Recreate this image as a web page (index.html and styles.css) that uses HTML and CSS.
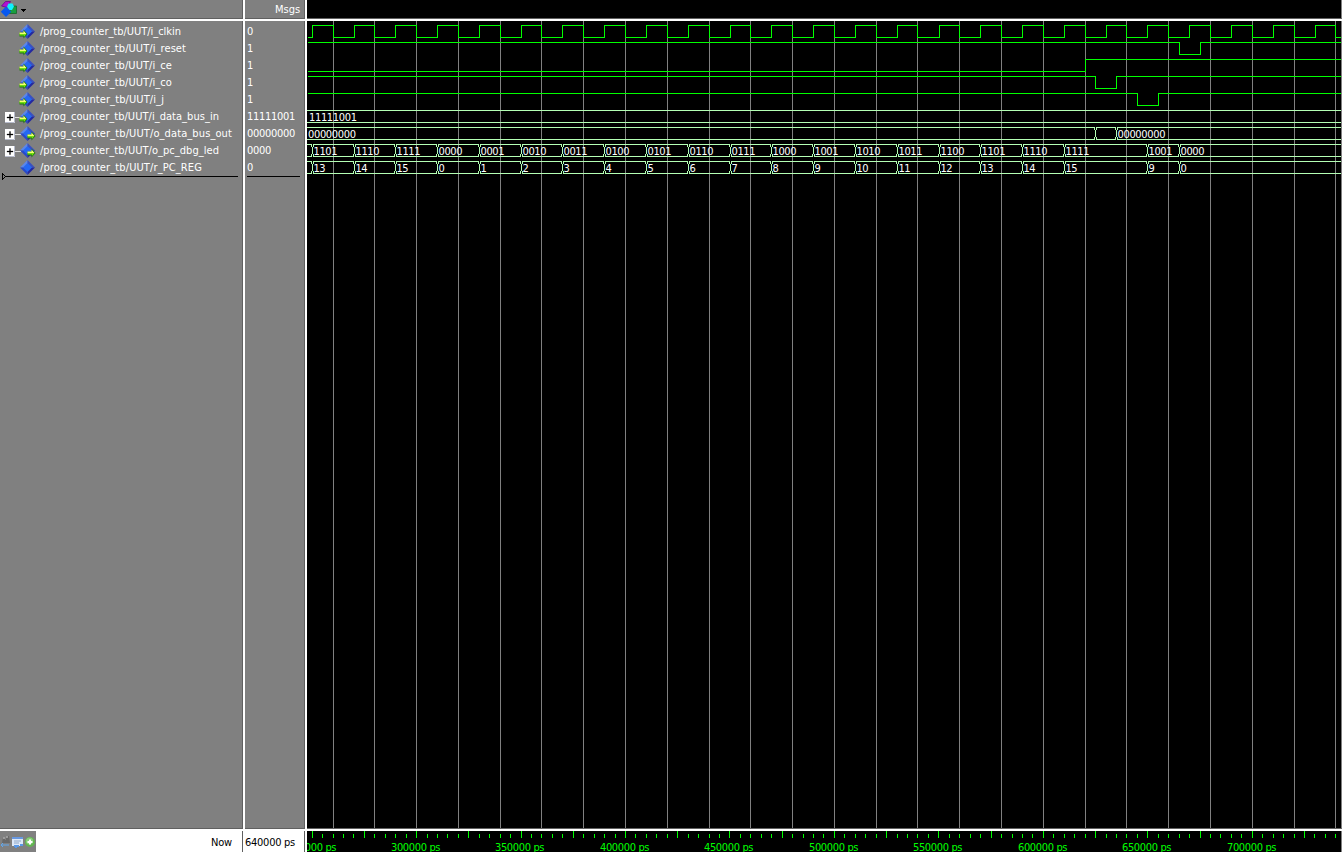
FILE: index.html
```html
<!DOCTYPE html>
<html lang="en">
<head>
<meta charset="utf-8">
<title>Wave</title>
<link rel="stylesheet" href="styles.css">
</head>
<body>
<svg class="defs" width="0" height="0">
  <defs>
    <g id="diamond">
      <path d="M7.5 0L0 7.5h7.500z" fill="#5b86ea"/>
      <path d="M7.5 0L15 7.500H7.500z" fill="#3a50c0"/>
      <path d="M0 7.500L7.500 15V7.500z" fill="#2a49c8"/>
      <path d="M15 7.500L7.500 15V7.500z" fill="#2428a0"/>
      <path d="M7.500 3L12 7.500 7.500 12 3 7.500z" fill="#2468f4"/>
    </g>
    <g id="arrow">
      <path d="M0 3h4V0l4 4.500-4 4.500V7H0z" fill="#187010"/>
      <path d="M0 3h4V1l3 3.500H0z" fill="#f4ff70"/>
      <path d="M0 4.500h7L4.500 7.500V6H0z" fill="#70e010"/>
    </g>
  </defs>
</svg>
<div class="wave">
  <div class="head names-head">
    <svg width="30" height="18" viewBox="0 0 30 18">
      <path d="M5.500 1.500h5L7 7.500 1.500 6z" fill="#b010d0" stroke="#600080" stroke-width=".7"/>
      <path d="M10.500 6h6v7.500h-7z" fill="#18a040" stroke="#106020" stroke-width=".7"/>
      <path d="M6 6.500l5.200 5.200-5.200 5.200-5.200-5.200z" fill="#0858f0"/>
      <path d="M8.500 3.500h4l1.500 3-2 3.500H9.500L7 6.500z" fill="#10f0ff"/>
      <path d="M21 9h5v1h-1v1h-1v1h-1v-1h-1v-1h-1z" fill="#000"/>
    </svg>
  </div>
  <div class="head msgs-head"><span data-w="25">Msgs</span></div>
  <div class="head wave-head"></div>
  <div class="edge"></div>

  <div class="names" id="names"></div>
  <div class="values" id="values"></div>
  <div class="plot"><svg id="plot" width="1034" height="807" viewBox="307 21 1034 807"></svg></div>
  <div class="edge"></div>

  <div class="foot names-foot">
    <svg class="tools" width="36" height="21" viewBox="0 0 36 21">
      <path d="M2 12l1-6h2v3h1V5h3l1 7z" fill="#686868"/>
      <path d="M3 7h2M6 6h2" stroke="#d0d0d0"/>
      <path d="M1 14h8M3 12l-2 2 2 2" stroke="#60a8f0" fill="none"/>
      <path d="M12 6h11v9H12z" fill="#dce8f8"/>
      <path d="M12 6h11v2H12z" fill="#6898e0"/>
      <path d="M14 10h7M14 12h5" stroke="#90a8c8"/>
      <path d="M14 14h5v2h-2v1h-2v-1h-1zM20 13h3v2h-3z" fill="#5898e8"/>
      <circle cx="30" cy="11" r="5" fill="#62b650"/>
      <circle cx="29.500" cy="10" r="3.500" fill="#8ace7c"/>
      <path d="M27.500 11h5M30 8.500v5" stroke="#fff" stroke-width="2"/>
    </svg>
    <span data-w="21">Now</span>
  </div>
  <div class="foot time-foot"><span data-w="50">640000 ps</span></div>
  <div class="foot ruler"><svg id="ruler" width="1034" height="21" viewBox="307 831 1034 21"></svg></div>
  <div class="edge"></div>
</div>
<script src="wave.js"></script>
</body>
</html>
```
FILE: styles.css
```css
body {
  margin: 0;
  background: #fff;
  overflow: hidden;
  font: 11px/17px "DejaVu Sans Condensed", "DejaVu Sans", sans-serif;
  font-stretch: condensed;
}
.defs { display: block; height: 0; position: absolute; }
.wave {
  display: grid;
  width: 1344px;
  height: 852px;
  grid-template-columns: 243px 62px 1037px 2px;
  grid-template-rows: 19px 810px 23px;
  white-space: nowrap;
}
.wave svg { display: block; }
.head, .names, .values, .plot {
  box-sizing: border-box;
  border-bottom: 1px solid #606060;
}
.names-head, .msgs-head, .names, .values {
  background: #808080;
  color: #fff;
  border-right: 1px solid #606060;
}
.msgs-head, .values, .time-foot { margin-left: 2px; }
.msgs-head { text-align: right; padding-right: 4px; line-height: 19px; }
.wave-head, .plot, .ruler {
  margin-left: 2px;
  background: #000;
  border-right: 1px solid #808080;
}
.names, .values, .plot { margin-top: 2px; }
.names, .values { padding-top: 2px; }
.name { display: flex; height: 17px; }
.name svg { width: 40px; height: 17px; flex: none; }
.values { padding-left: 2px; }
.value { height: 17px; }
.wave .mark { width: 239px; height: 7px; margin-top: -3px; }
.bar { height: 1px; width: 53px; background: #000; }
.foot { margin-top: 2px; height: 21px; box-sizing: border-box; color: #000; line-height: 23px; }
.names-foot {
  display: flex;
  justify-content: space-between;
  padding-right: 10px;
  border-right: 1px solid #606060;
}
.time-foot { border-right: 1px solid #606060; }
.tools { background: #808080; }
.grid { fill: #808080; }
.clock { fill: none; stroke: #00ff00; shape-rendering: crispEdges; }
.bus { fill: none; stroke: #b4ffb4; shape-rendering: crispEdges; }
.label { fill: #fff; }
.tick { fill: #00ff00; }
```
FILE: wave.js
```js
const signals = [
  ["i_clkin", "0", 141, "in"], ["i_reset", "1", 146, "in"], ["i_ce", "1", 132, "in"],
  ["i_co", "1", 132, "in"], ["i_j", "1", 124, "in"],
  ["i_data_bus_in", "11111001", 179, "in", true],
  ["o_data_bus_out", "00000000", 192, "out", true],
  ["o_pc_dbg_led", "0000", 179, "out", true],
  ["r_PC_REG", "0", 162, ""]
];
let names = "", values = "";
for (const [name, value, width, dir, bus] of signals) {
  let icon = '<use href="#diamond" x="20" y="1"/>';
  if (bus) icon = '<path d="M15 9.500h6" stroke="#e0e0e0"/><path d="M5 4h10v11H5z" fill="#fff"/><path d="M5 14.500h9.500V4" stroke="#b8bccc" fill="none"/><path d="M7 9h6v1H7zM9.500 6.500h1v6h-1z" fill="#000" stroke="#000" stroke-width=".3"/>' + icon;
  if (dir === "in") icon += '<use href="#arrow" x="19.500" y="6.500"/>';
  if (dir === "out") icon += '<use href="#arrow" x="27.500" y="6.500"/>';
  names += `<div class="name"><svg viewBox="0 0 40 17">${icon}</svg><span data-w="${width}">/prog_counter_tb/UUT/${name}</span></div>`;
  values += `<div class="value"><span data-w="${value.length * 6}">${value}</span></div>`;
}
names += '<svg class="mark"><path d="M2.500 .5v6M2.500 .5l3 3-3 3M5 3.500h233" fill="none" stroke="#000" shape-rendering="crispEdges"/></svg>';
document.getElementById("names").innerHTML = names;
document.getElementById("values").innerHTML = values + '<div class="bar"></div>';

for (const el of document.querySelectorAll("[data-w]")) {
  const w = el.getBoundingClientRect().width;
  el.style.letterSpacing = (el.dataset.w - w) / el.textContent.length + "px";
}

const START = 333, STEP = 41.785, END = 1341;
const text = (x, y, s, cls, w) => `<text class="${cls}" x="${x}" y="${y}" textLength="${w}">${s}</text>`;
let out = "";
for (let k = 0; k < 25; k++) out += `<path class="grid" d="M${Math.floor(START + STEP * k)} 21h1v807h-1z"/>`;

let clock = "M308 37.500";
for (let k = 0; k < 25; k++) {
  const fall = Math.floor(START + STEP * k) + .5;
  const rise = Math.floor(START + STEP * (k - .5) + .15) + .5;
  clock += `H${rise}V25.500H${fall}V37.500`;
}
out += `<path class="clock" d="${clock}H${END}"/>`;
const pulse = (y, a, b) => `<path class="clock" d="M308 ${y}.500H${a}.500V${y + 12}.500H${b}.500V${y}.500H${END}"/>`;
out += pulse(42, 1179, 1200) + pulse(76, 1095, 1116) + pulse(93, 1137, 1158);
out += `<path class="clock" d="M308 71.500H1085.500V59.500H${END}"/>`;

function bus(y, changes, labels) {
  let d = "", from = 307;
  for (const x of changes) {
    d += `M${from} ${y}.500H${x}M${from} ${y + 12}.500H${x}`;
    d += `M${x - .5} ${y}v3M${x - .5} ${y + 10}v3M${x + .5} ${y + 3}v7M${x + 1.5} ${y}v3M${x + 1.5} ${y + 10}v3`;
    from = x + 1;
  }
  d += `M${from} ${y}.500H${END}M${from} ${y + 12}.500H${END}`;
  out += `<path class="bus" d="${d}"/>`;
  for (const [x, s] of labels) out += text(x, y + 11, s, "label", s.length * 6);
}
bus(110, [], [[309, "11111001"]]);
bus(127, [1095, 1116], [[308, "00000000"], [1117.5, "00000000"]]);
const edges = [], led = [], reg = [];
for (let k = 0; k < 19; k++) {
  const x = Math.floor(START + STEP * (k - .5) + .15);
  const n = (13 + k) % 16;
  edges.push(x);
  led.push([x + 1.5, n.toString(2).padStart(4, "0")]);
  reg.push([x + 1.5, String(n)]);
}
edges.push(1147, 1179);
led.push([1148.5, "1001"], [1180.5, "0000"]);
reg.push([1148.5, "9"], [1180.5, "0"]);
bus(144, edges, led);
bus(161, edges, reg);
document.getElementById("plot").innerHTML = out;

let ruler = "";
for (let k = 0; k < 99; k++) {
  const x = Math.floor(312.11 + STEP / 4 * k);
  const y = k % 5 ? 834 : 831;
  ruler += `<path class="tick" d="M${x} ${y}h1V838h-1z"/>`;
}
for (let k = 0; k < 10; k++) {
  ruler += text(Math.floor(287 + STEP * 2.5 * k), 851, `${250000 + 50000 * k} ps`, "tick", 49.5);
}
document.getElementById("ruler").innerHTML = ruler;
```
